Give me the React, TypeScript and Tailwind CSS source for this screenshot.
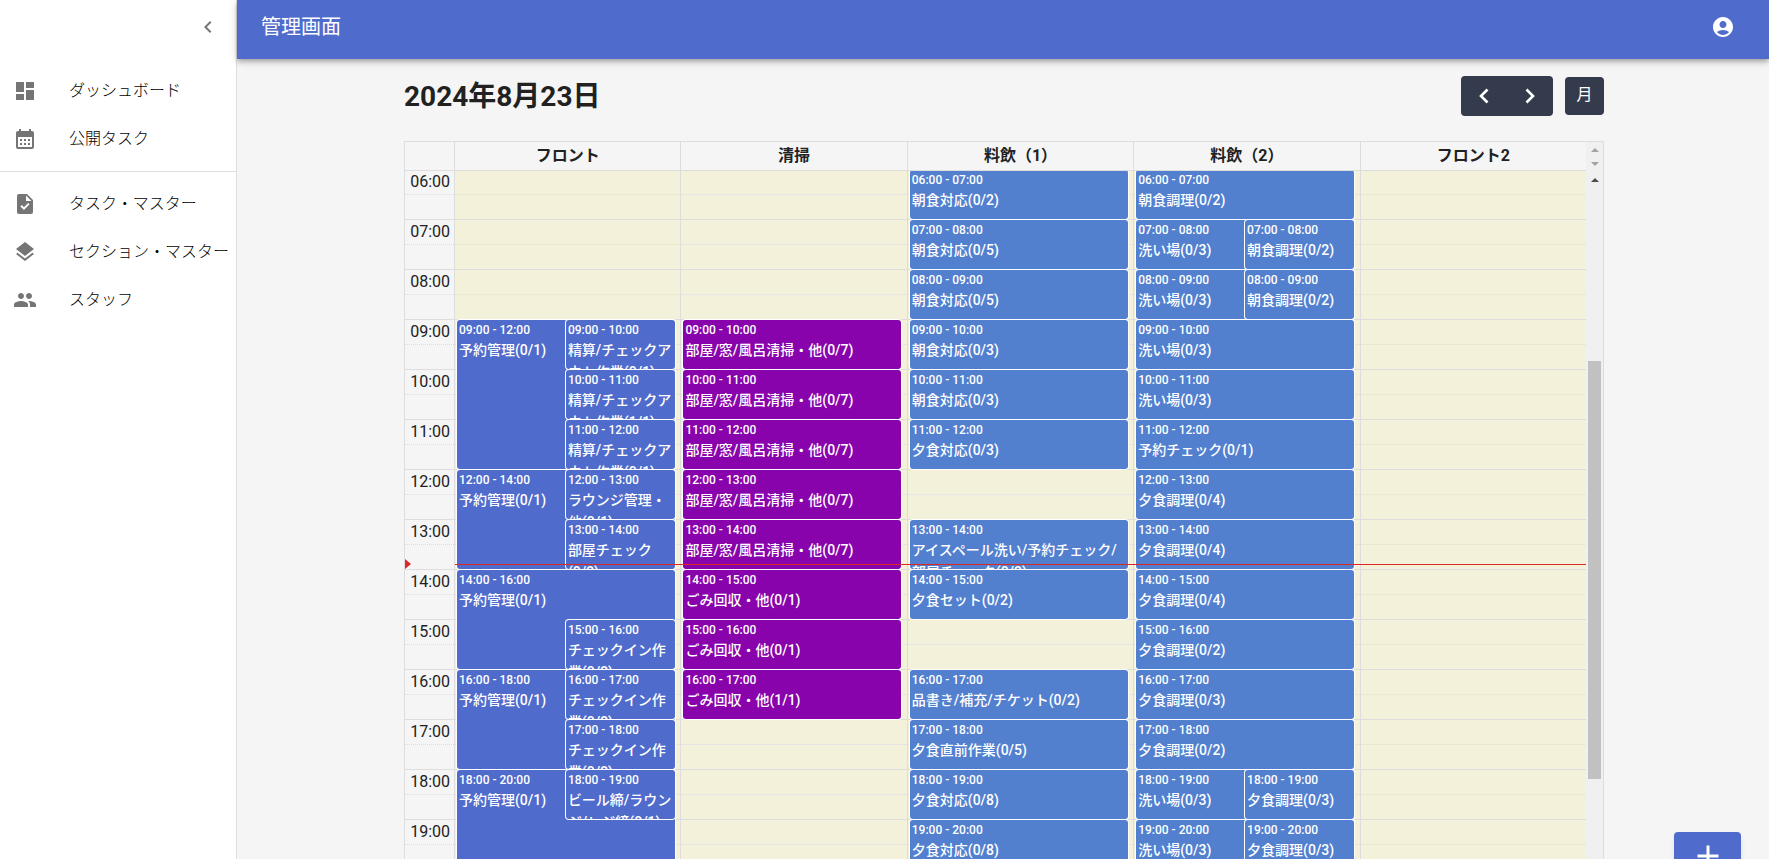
import React from "react";
import {
  MdAccountCircle,
  MdAdd,
  MdCalendarMonth,
  MdChevronLeft,
  MdDashboard,
  MdLayers,
  MdPeople,
  MdTask,
} from "react-icons/md";
import type { IconType } from "react-icons";

const FIRST_HOUR = 6;
const HOURS = Array.from({ length: 15 }, (_, i) => FIRST_HOUR + i);

type Lane = "full" | "right";

interface Shift {
  from: number;
  to: number;
  title: string;
  lane?: Lane;
}

interface Section {
  name: string;
  color: string;
  shifts: Shift[];
}

const sections: Section[] = [
  {
    name: "フロント",
    color: "bg-[#4f6bcb]",
    shifts: [
      { from: 9, to: 12, title: "予約管理(0/1)" },
      { from: 12, to: 14, title: "予約管理(0/1)" },
      { from: 14, to: 16, title: "予約管理(0/1)" },
      { from: 16, to: 18, title: "予約管理(0/1)" },
      { from: 18, to: 20, title: "予約管理(0/1)" },
      { from: 9, to: 10, title: "精算/チェックアウト作業(0/1)", lane: "right" },
      { from: 10, to: 11, title: "精算/チェックアウト作業(1/1)", lane: "right" },
      { from: 11, to: 12, title: "精算/チェックアウト作業(0/1)", lane: "right" },
      { from: 12, to: 13, title: "ラウンジ管理・他(0/1)", lane: "right" },
      { from: 13, to: 14, title: "部屋チェック(0/2)", lane: "right" },
      { from: 15, to: 16, title: "チェックイン作業(0/2)", lane: "right" },
      { from: 16, to: 17, title: "チェックイン作業(0/2)", lane: "right" },
      { from: 17, to: 18, title: "チェックイン作業(0/2)", lane: "right" },
      { from: 18, to: 19, title: "ビール締/ラウンジ/レジ締(0/1)", lane: "right" },
    ],
  },
  {
    name: "清掃",
    color: "bg-[#8803ab]",
    shifts: [
      { from: 9, to: 10, title: "部屋/窓/風呂清掃・他(0/7)" },
      { from: 10, to: 11, title: "部屋/窓/風呂清掃・他(0/7)" },
      { from: 11, to: 12, title: "部屋/窓/風呂清掃・他(0/7)" },
      { from: 12, to: 13, title: "部屋/窓/風呂清掃・他(0/7)" },
      { from: 13, to: 14, title: "部屋/窓/風呂清掃・他(0/7)" },
      { from: 14, to: 15, title: "ごみ回収・他(0/1)" },
      { from: 15, to: 16, title: "ごみ回収・他(0/1)" },
      { from: 16, to: 17, title: "ごみ回収・他(1/1)" },
    ],
  },
  {
    name: "料飲（1）",
    color: "bg-[#5280cf]",
    shifts: [
      { from: 6, to: 7, title: "朝食対応(0/2)" },
      { from: 7, to: 8, title: "朝食対応(0/5)" },
      { from: 8, to: 9, title: "朝食対応(0/5)" },
      { from: 9, to: 10, title: "朝食対応(0/3)" },
      { from: 10, to: 11, title: "朝食対応(0/3)" },
      { from: 11, to: 12, title: "夕食対応(0/3)" },
      { from: 13, to: 14, title: "アイスペール洗い/予約チェック/部屋チェック(0/2)" },
      { from: 14, to: 15, title: "夕食セット(0/2)" },
      { from: 16, to: 17, title: "品書き/補充/チケット(0/2)" },
      { from: 17, to: 18, title: "夕食直前作業(0/5)" },
      { from: 18, to: 19, title: "夕食対応(0/8)" },
      { from: 19, to: 20, title: "夕食対応(0/8)" },
    ],
  },
  {
    name: "料飲（2）",
    color: "bg-[#5280cf]",
    shifts: [
      { from: 6, to: 7, title: "朝食調理(0/2)" },
      { from: 7, to: 8, title: "洗い場(0/3)" },
      { from: 7, to: 8, title: "朝食調理(0/2)", lane: "right" },
      { from: 8, to: 9, title: "洗い場(0/3)" },
      { from: 8, to: 9, title: "朝食調理(0/2)", lane: "right" },
      { from: 9, to: 10, title: "洗い場(0/3)" },
      { from: 10, to: 11, title: "洗い場(0/3)" },
      { from: 11, to: 12, title: "予約チェック(0/1)" },
      { from: 12, to: 13, title: "夕食調理(0/4)" },
      { from: 13, to: 14, title: "夕食調理(0/4)" },
      { from: 14, to: 15, title: "夕食調理(0/4)" },
      { from: 15, to: 16, title: "夕食調理(0/2)" },
      { from: 16, to: 17, title: "夕食調理(0/3)" },
      { from: 17, to: 18, title: "夕食調理(0/2)" },
      { from: 18, to: 19, title: "洗い場(0/3)" },
      { from: 18, to: 19, title: "夕食調理(0/3)", lane: "right" },
      { from: 19, to: 20, title: "洗い場(0/3)" },
      { from: 19, to: 20, title: "夕食調理(0/3)", lane: "right" },
    ],
  },
  { name: "フロント2", color: "bg-[#4f6bcb]", shifts: [] },
];

const clock = (hour: number) => `${String(hour).padStart(2, "0")}:00`;

function NavItem({ icon: Icon, label }: { icon: IconType; label: string }) {
  return (
    <li>
      <a href="#" className="flex h-12 items-center whitespace-nowrap pl-[13px]">
        <Icon className="mr-8 size-6 shrink-0 text-[#757575]" />
        <span className="text-base font-light text-black">{label}</span>
      </a>
    </li>
  );
}

function Sidebar() {
  return (
    <aside className="w-[237px] shrink-0 border-r border-[#dddddd] bg-white">
      <div className="flex h-[59px] items-center justify-end pr-4 pb-[5px]">
        <button aria-label="メニューを閉じる" className="text-[#757575]">
          <MdChevronLeft className="size-6" />
        </button>
      </div>
      <nav>
        <ul className="border-b border-[#dddddd] py-2">
          <NavItem icon={MdDashboard} label="ダッシュボード" />
          <NavItem icon={MdCalendarMonth} label="公開タスク" />
        </ul>
        <ul className="py-2">
          <NavItem icon={MdTask} label="タスク・マスター" />
          <NavItem icon={MdLayers} label="セクション・マスター" />
          <NavItem icon={MdPeople} label="スタッフ" />
        </ul>
      </nav>
    </aside>
  );
}

function Chevron({ points }: { points: string }) {
  return (
    <svg viewBox="0 0 24 24" className="size-6" fill="none" stroke="currentColor" strokeWidth="2.6">
      <polyline points={points} />
    </svg>
  );
}

function Toolbar() {
  return (
    <div className="flex items-center justify-between">
      <h2 className="pt-0.5 text-[28px] leading-[38px] font-bold">2024年8月23日</h2>
      <div className="flex items-center gap-3">
        <div className="flex h-10 overflow-hidden rounded bg-[#333b4d] text-white">
          <button aria-label="前の日" className="flex w-[46px] items-center justify-center">
            <Chevron points="15.5,5.5 9,12 15.5,18.5" />
          </button>
          <button aria-label="次の日" className="flex w-[46px] items-center justify-center">
            <Chevron points="8.5,5.5 15,12 8.5,18.5" />
          </button>
        </div>
        <button className="h-[38px] w-[39px] rounded bg-[#333b4d] pb-0.5 text-base text-white">月</button>
      </div>
    </div>
  );
}

function EventCard({ shift, color }: { shift: Shift; color: string }) {
  const lane = shift.lane === "right" ? "col-start-2" : "col-start-1 col-span-2";
  return (
    <div
      className={`${color} ${lane} mt-px overflow-hidden rounded-[3px] px-0.5 pt-0.5 font-medium text-white shadow-[0_0_0_1px_#fff]`}
      style={{ gridRow: `${shift.from - FIRST_HOUR + 1} / ${shift.to - FIRST_HOUR + 1}` }}
    >
      <div className="text-xs leading-[17px] whitespace-nowrap">
        {clock(shift.from)} - {clock(shift.to)}
      </div>
      <div className="text-sm leading-[22px]">{shift.title}</div>
    </div>
  );
}

function SlotLines() {
  return (
    <div className="[grid-area:1/1]">
      {HOURS.map((hour) => (
        <div key={hour} className="h-[50px] border-t border-[#dddddd]">
          <div className="h-6" />
          <div className="border-t border-dotted border-[#dddddd]" />
        </div>
      ))}
    </div>
  );
}

function SectionColumn({ section }: { section: Section }) {
  return (
    <div className="grid min-w-0 border-l border-[#dddddd] bg-[#f4f1db]">
      <SlotLines />
      <div className="mr-[2.5%] ml-0.5 grid auto-rows-[50px] grid-cols-2 [grid-area:1/1]">
        {section.shifts.map((shift, i) => (
          <EventCard key={i} shift={shift} color={section.color} />
        ))}
      </div>
    </div>
  );
}

function NowIndicator() {
  return (
    <div className="pointer-events-none absolute inset-x-0 top-[390px] flex h-[10px] items-center">
      <svg viewBox="0 0 6 10" className="h-[10px] w-[6px]" fill="#dc2727">
        <path d="M0 0 6 5 0 10z" />
      </svg>
      <div className="mt-px ml-11 h-px flex-1 bg-[#dc2727]" />
    </div>
  );
}

function Arrow({ down }: { down?: boolean }) {
  return (
    <svg viewBox="0 0 8 4" className="h-1 w-2 shrink-0" fill="currentColor">
      <path d={down ? "M0 0h8L4 4z" : "M4 0l4 4H0z"} />
    </svg>
  );
}

function Calendar() {
  return (
    <div className="flex min-h-0 flex-1 flex-col border-x border-t border-[#dddddd]">
      <div className="flex h-[29px] shrink-0">
        <div className="grid flex-1 grid-cols-[49px_repeat(5,minmax(0,1fr))] border-b border-[#dddddd]">
          <div />
          {sections.map((section) => (
            <div
              key={section.name}
              className="border-l border-[#dddddd] text-center text-base leading-7 font-bold"
            >
              {section.name}
            </div>
          ))}
        </div>
        <div className="flex w-[17px] flex-col items-center justify-between bg-[#f0f0f0] pt-[6px] pb-[5px] text-[#a3a3a3]">
          <Arrow />
          <Arrow down />
        </div>
      </div>
      <div className="flex min-h-0 flex-1">
        <div className="min-w-0 flex-1 overflow-hidden">
          <div className="relative -mt-0.5 grid grid-cols-[49px_repeat(5,minmax(0,1fr))]">
            <div className="grid">
              <SlotLines />
              <div className="[grid-area:1/1]">
                {HOURS.map((hour) => (
                  <div key={hour} className="h-[50px] pt-px pr-1 text-right text-base text-[#212121]">
                    {clock(hour)}
                  </div>
                ))}
              </div>
            </div>
            {sections.map((section) => (
              <SectionColumn key={section.name} section={section} />
            ))}
            <NowIndicator />
          </div>
        </div>
        <div className="flex w-[17px] flex-col items-center bg-[#f0f0f0] pt-[7px] text-[#4d4d4d]">
          <Arrow />
          <div className="mt-[179px] h-[418px] w-[13px] shrink-0 bg-[#c1c1c1]" />
        </div>
      </div>
    </div>
  );
}

export default function App() {
  return (
    <div className="flex h-screen overflow-hidden bg-[#f5f5f5] font-[Roboto,'Noto_Sans_CJK_JP',sans-serif] text-[#212121]">
      <Sidebar />
      <div className="flex min-w-0 flex-1 flex-col">
        <header className="flex h-[59px] shrink-0 items-center justify-between bg-[#4f6bcb] pr-[34px] pb-[5px] pl-6 text-white shadow-[0_2px_4px_-1px_rgba(0,0,0,0.2),0_4px_5px_0_rgba(0,0,0,0.14),0_1px_10px_0_rgba(0,0,0,0.12)]">
          <h1 className="text-xl">管理画面</h1>
          <button aria-label="アカウント">
            <MdAccountCircle className="size-6" />
          </button>
        </header>
        <main className="flex min-h-0 flex-1 justify-center pt-[17px] pl-0.5">
          <div className="flex max-w-[1200px] min-w-0 flex-1 flex-col gap-[25px]">
            <Toolbar />
            <Calendar />
          </div>
        </main>
      </div>
      <button
        aria-label="追加"
        className="fixed right-7 -bottom-[21px] flex h-12 w-[67px] items-center justify-center rounded bg-[#4f6bcb] text-white shadow-md"
      >
        <MdAdd className="size-9" />
      </button>
    </div>
  );
}
